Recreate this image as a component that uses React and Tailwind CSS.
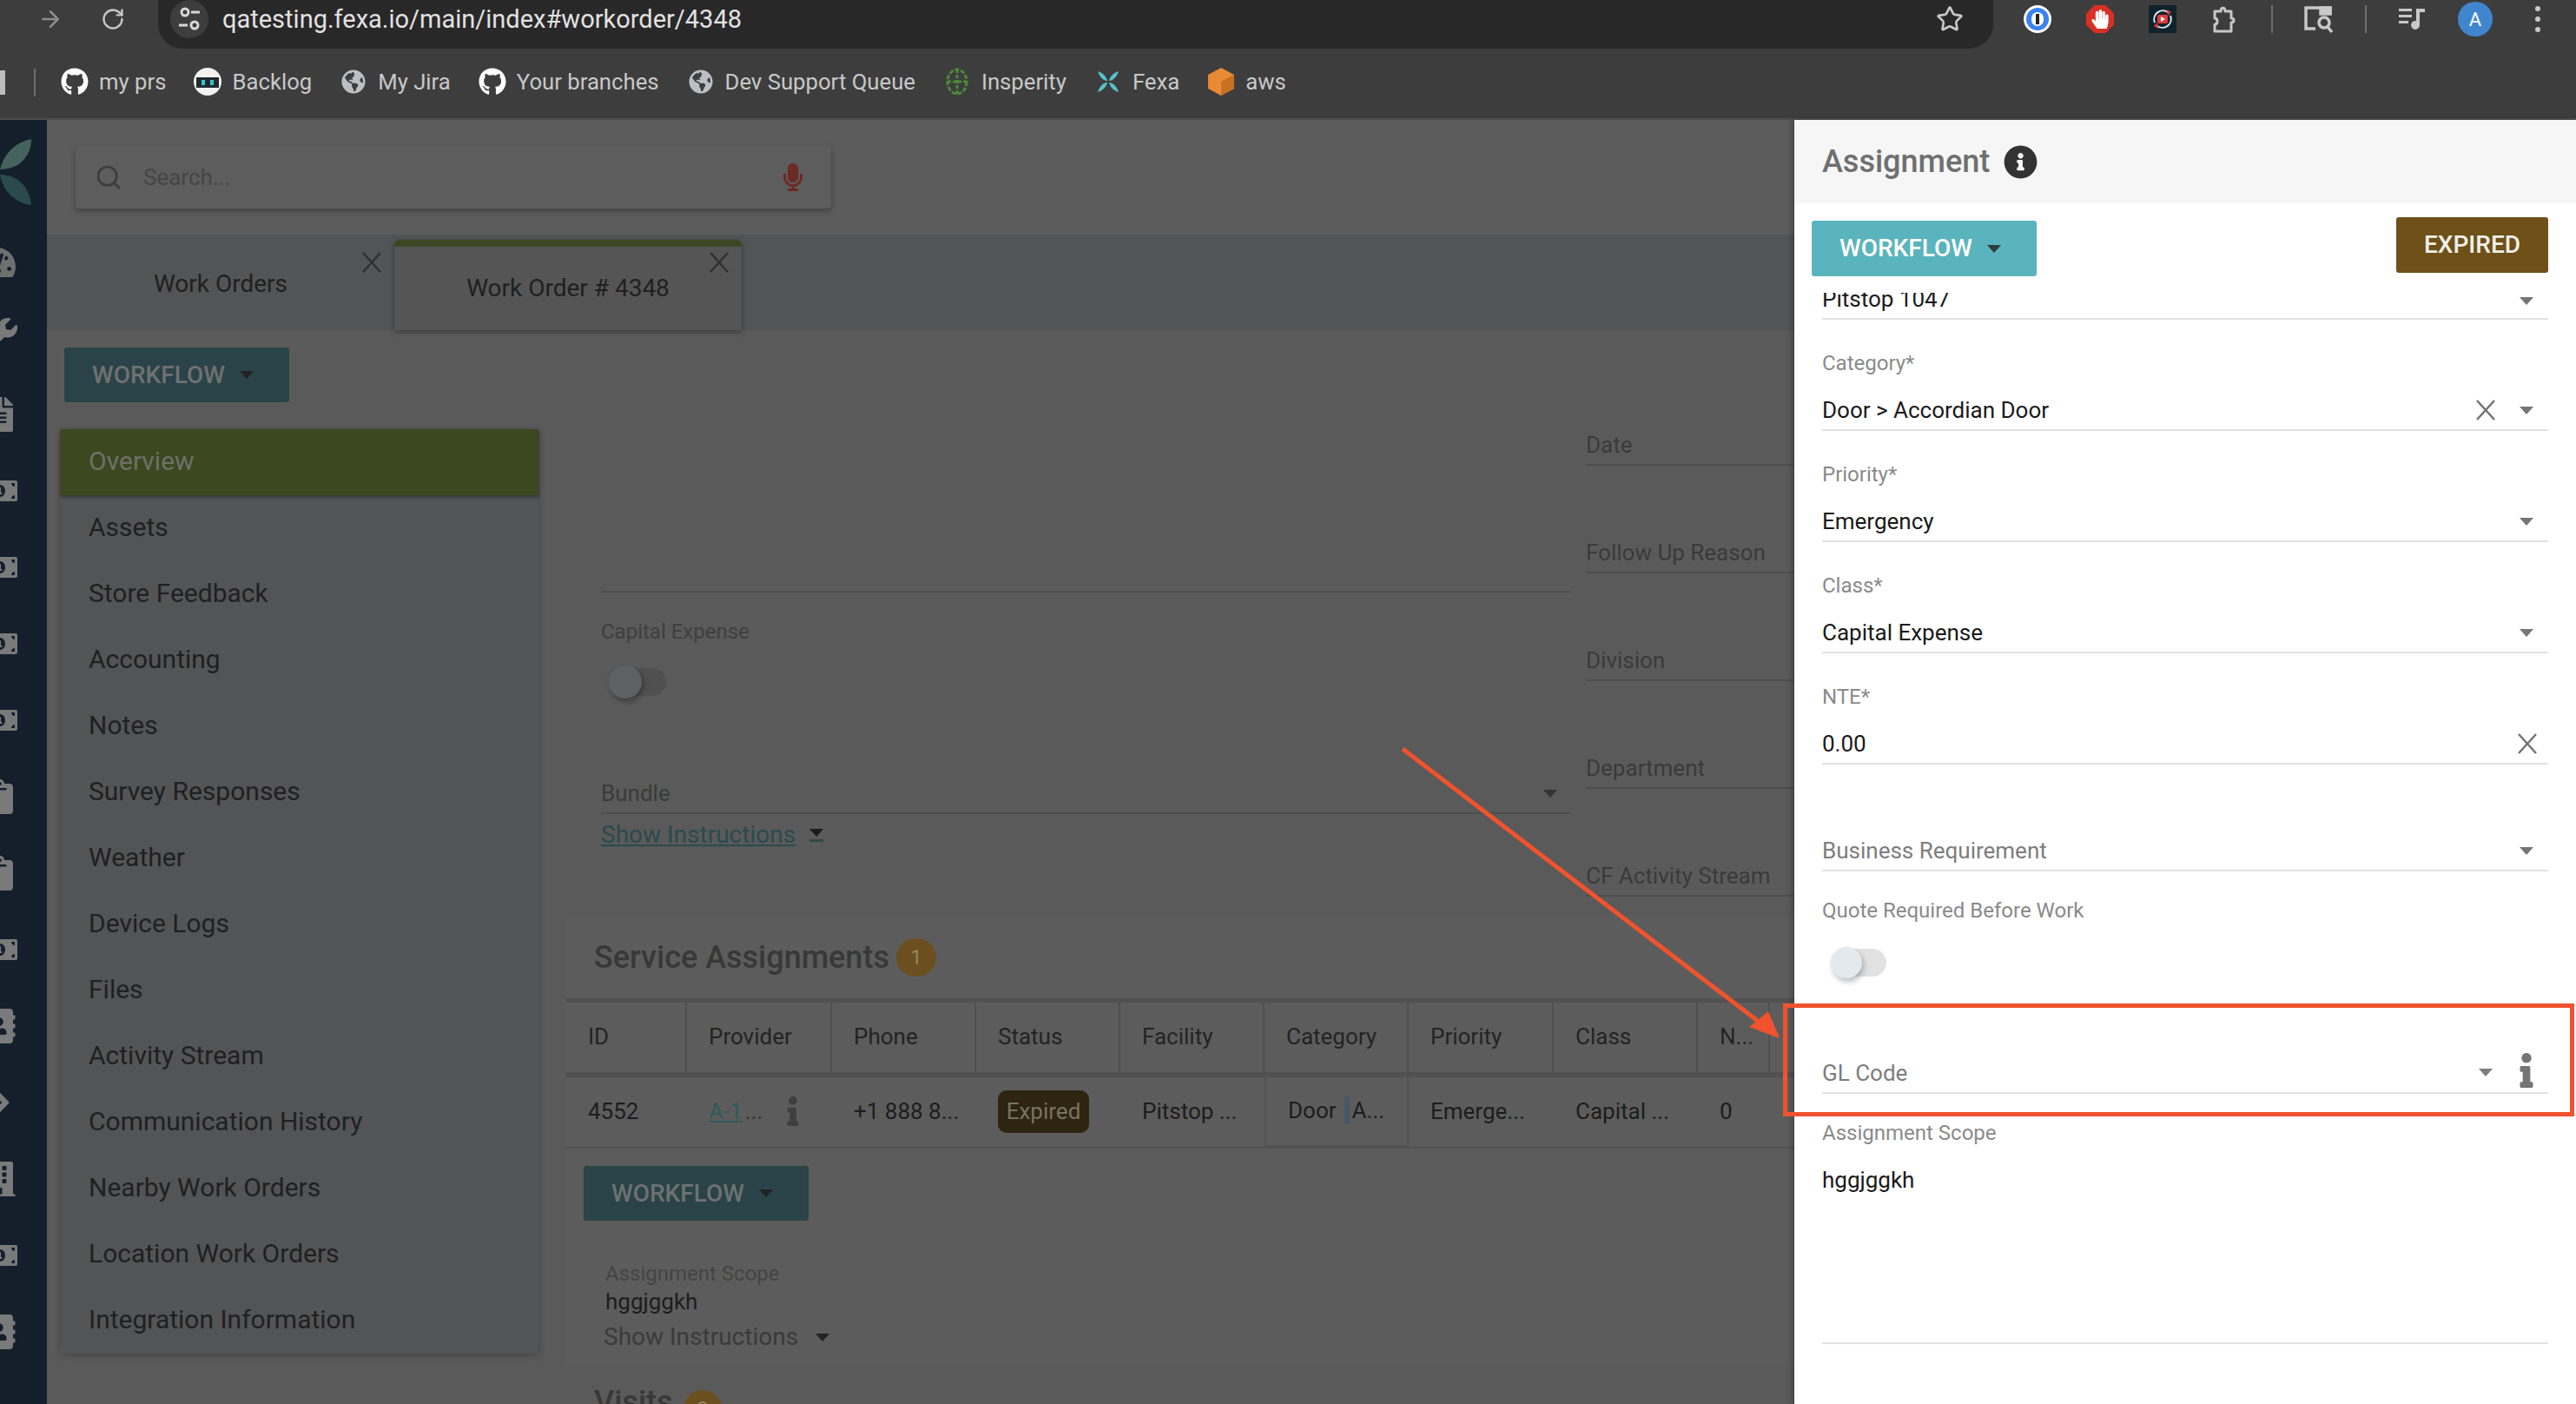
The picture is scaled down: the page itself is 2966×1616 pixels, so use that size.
import { ArrowRight, RotateCw, Star, Search } from 'lucide-react'
import {
  FaGithub, FaGlobeAmericas, FaHandPaper, FaMicrophone, FaInfo, FaInfoCircle, FaTachometerAlt, FaWrench,
  FaFileAlt, FaMoneyBillAlt, FaClipboard, FaAddressBook, FaChevronRight, FaBuilding,
} from 'react-icons/fa'

const menu = [
  'Overview', 'Assets', 'Store Feedback', 'Accounting', 'Notes', 'Survey Responses', 'Weather', 'Device Logs',
  'Files', 'Activity Stream', 'Communication History', 'Nearby Work Orders', 'Location Work Orders', 'Integration Information',
]

const columns = ['ID', 'Provider', 'Phone', 'Status', 'Facility', 'Category', 'Priority', 'Class', 'N...']
const gridCols = 'grid grid-cols-[140px_167px_166px_166px_166px_166px_167px_166px_83px_1fr]'

// Iconos recortados del sidebar: [icono, alto de la fila]
const sideIcons = [
  [FaWrench, 94], [FaFileAlt, 88], [FaMoneyBillAlt, 88], [FaMoneyBillAlt, 88], [FaMoneyBillAlt, 88], [FaMoneyBillAlt, 88],
  [FaClipboard, 88], [FaClipboard, 88], [FaMoneyBillAlt, 88], [FaAddressBook, 88], [FaChevronRight, 88], [FaBuilding, 88],
  [FaMoneyBillAlt, 88], [FaAddressBook, 88],
]

function Caret({ className = 'text-[#757575]' }) {
  return (
    <svg width="16" height="9" viewBox="0 0 16 9" className={`shrink-0 ${className}`}>
      <path d="M0 0h16L8 9z" fill="currentColor" />
    </svg>
  )
}

function Cross({ className = 'text-[#707070]', size = 24 }) {
  return (
    <svg width={size} height={size} viewBox="0 0 24 24" className={`shrink-0 ${className}`}>
      <path d="M2 1l20 22M22 1L2 23" stroke="currentColor" strokeWidth="2.4" fill="none" />
    </svg>
  )
}

function Field({ label, value, clear, caret = true }) {
  return (
    <div className="h-[128px] flex flex-col justify-end border-b-2 border-[#e2e2e2]">
      <div className="h-[24px] leading-[24px] text-[24px] text-[#8a8a8a] mb-[20px]">{label}</div>
      <div className="h-[44px] flex items-center text-[26px] text-[#1a1a1a]">
        <span className="flex-1">{value}</span>
        {clear && <Cross className={caret ? 'text-[#707070] mr-[27px]' : 'text-[#707070] mr-[12px]'} />}
        {caret && <Caret className="text-[#757575] mr-[17px]" />}
      </div>
    </div>
  )
}

function DimField({ label }) {
  return (
    <div className="h-[124px] flex flex-col justify-end border-b-2 border-[#4d4d4d]">
      <div className="h-[44px] flex items-center text-[26px] text-[#3a3a3a]">{label}</div>
    </div>
  )
}

function WorkflowDim() {
  return (
    <button className="w-[259px] h-[63px] rounded-[3px] bg-[#2a4348] flex items-center pl-[32px] gap-[17px] text-[28px] font-medium text-[#6e7172]">
      WORKFLOW <Caret className="text-[#222222]" />
    </button>
  )
}

function Bookmark({ icon, label, className = 'mr-[32px]' }) {
  return (
    <div className={`flex items-center gap-[12px] ${className}`}>
      <span className="w-[32px] h-[36px] flex items-center justify-center">{icon}</span>
      <span className="text-[25.7px] text-[#c8c8c8] whitespace-nowrap">{label}</span>
    </div>
  )
}

function ToolSlot({ children, wide = true }) {
  return <span className={`${wide ? 'w-[72px]' : 'w-[36px]'} h-[44px] flex items-center justify-center`}>{children}</span>
}

function BrowserActions() {
  return (
    <div className="ml-[15px] -mt-[12px] flex items-center">
      <ToolSlot>
        <span className="w-[32px] h-[32px] rounded-full bg-[#3b82f0] border-[3px] border-white flex items-center justify-center">
          <span className="w-[14px] h-[16px] rounded-full bg-white flex items-center justify-center">
            <span className="w-[4px] h-[12px] bg-[#222222]" />
          </span>
        </span>
      </ToolSlot>
      <ToolSlot>
        <span className="w-[32px] h-[32px] bg-[#d93025] [clip-path:polygon(30%_0,70%_0,100%_30%,100%_70%,70%_100%,30%_100%,0_70%,0_30%)] flex items-center justify-center">
          <FaHandPaper size={22} className="text-white" />
        </span>
      </ToolSlot>
      <ToolSlot>
        <span className="w-[32px] h-[32px] bg-[#10222c] flex items-center justify-center">
          <svg width="28" height="28" viewBox="0 0 28 28" fill="none">
            <path d="M5 18A10 10 0 0 1 20 6M23 10A10 10 0 0 1 8 22" stroke="#dce8ee" strokeWidth="2" />
            <path d="M19 3l5 3-4 4zM9 25l-5-3 4-4z" fill="#e03c3c" />
            <rect x="8" y="9" width="12" height="10" rx="2" fill="#e03c3c" />
            <path d="M12 11l5 3-5 3z" fill="#ffffff" />
          </svg>
        </span>
      </ToolSlot>
      <ToolSlot>
        <svg width="30" height="34" viewBox="0 0 30 34" fill="none" stroke="#c8c8c8" strokeWidth="3" strokeLinejoin="round">
          <path d="M3 8h7c0-5 5-5 5 0h7v8c4 0 4 5 0 5v10H3v-8c4 0 4-7 0-7z" />
        </svg>
      </ToolSlot>
      <ToolSlot wide={false}>
        <span className="w-[2px] h-[32px] bg-[#6e6e6e]" />
      </ToolSlot>
      <ToolSlot>
        <svg width="36" height="34" viewBox="0 0 36 34" fill="none" stroke="#c8c8c8" strokeWidth="3.5">
          <path d="M14 28H3V4h28v8" />
          <circle cx="24" cy="21" r="6" />
          <path d="M28 26l5 6" />
          <path d="M20 4h11v7H20z" fill="#c8c8c8" />
        </svg>
      </ToolSlot>
      <ToolSlot wide={false}>
        <span className="w-[2px] h-[32px] bg-[#6e6e6e]" />
      </ToolSlot>
      <ToolSlot>
        <svg width="32" height="26" viewBox="0 0 32 26" fill="#c8c8c8">
          <path d="M0 1h15v3H0zM0 8h15v3H0zM0 15h11v3H0z" />
          <path d="M20 1h10v4h-6v15a5 5 0 1 1-4-5z" />
        </svg>
      </ToolSlot>
      <ToolSlot>
        <span className="w-[40px] h-[40px] rounded-full bg-[#3f86cf] flex items-center justify-center text-[22px] text-white">A</span>
      </ToolSlot>
      <ToolSlot>
        <span className="flex flex-col gap-[6px]">
          <span className="w-[6px] h-[6px] rounded-full bg-[#c8c8c8]" />
          <span className="w-[6px] h-[6px] rounded-full bg-[#c8c8c8]" />
          <span className="w-[6px] h-[6px] rounded-full bg-[#c8c8c8]" />
        </span>
      </ToolSlot>
    </div>
  )
}

function BrowserBar() {
  return (
    <div className="h-[138px] shrink-0 bg-[#3d3d3d] border-b-2 border-[#4e4e4e]">
      <div className="h-[56px] flex items-center">
        <ArrowRight size={30} className="ml-[43px] -mt-[12px] text-[#8c8c8c]" />
        <RotateCw size={28} className="ml-[43px] -mt-[12px] text-[#c8c8c8]" />
        <div className="ml-[38px] w-[2113px] h-[56px] rounded-b-[28px] bg-[#282828] flex items-center pl-[14px] pr-[34px]">
          <span className="w-[44px] h-[44px] -mt-[12px] rounded-full bg-[#3d3d3d] flex items-center justify-center">
            <svg width="24" height="30" viewBox="0 0 24 30" fill="none" stroke="#d8d8d8" strokeWidth="3">
              <circle cx="7" cy="7" r="4" />
              <path d="M14 7h10M0 22h10" />
              <circle cx="18" cy="22" r="4" />
            </svg>
          </span>
          <span className="ml-[16px] -mt-[10px] flex-1 text-[29px] text-[#e2e2e2]">qatesting.fexa.io/main/index#workorder/4348</span>
          <Star size={32} className="-mt-[12px] text-[#c8c8c8]" />
        </div>
        <BrowserActions />
      </div>
      <div className="h-[80px] pb-[3px] flex items-center">
        <span className="w-[6px] h-[28px] border-y-[6px] border-r-[6px] border-[#bdbdbd]" />
        <span className="ml-[33px] mr-[29px] w-[2px] h-[32px] bg-[#6e6e6e]" />
        <Bookmark icon={<FaGithub size={32} className="text-white" />} label="my prs" />
        <Bookmark
          icon={
            <svg width="32" height="32" viewBox="0 0 32 32">
              <circle cx="16" cy="16" r="16" fill="#f2f2f2" />
              <rect x="3" y="11" width="26" height="12" fill="#222a30" />
              <rect x="9" y="14" width="4" height="6" fill="#35c5d0" />
              <rect x="19" y="14" width="4" height="6" fill="#35c5d0" />
            </svg>
          }
          label="Backlog"
        />
        <Bookmark icon={<FaGlobeAmericas size={28} className="text-[#bcc0c6]" />} label="My Jira" />
        <Bookmark icon={<FaGithub size={32} className="text-white" />} label="Your branches" />
        <Bookmark icon={<FaGlobeAmericas size={28} className="text-[#bcc0c6]" />} label="Dev Support Queue" />
        <Bookmark
          icon={
            <svg width="28" height="32" viewBox="0 0 28 32" fill="none" stroke="#4c8a3c" strokeWidth="3">
              <ellipse cx="14" cy="16" rx="11" ry="14" strokeDasharray="5 2" />
              <path d="M3 16h22M14 2v28" strokeDasharray="4 2" />
            </svg>
          }
          label="Insperity"
        />
        <Bookmark
          icon={
            <svg width="26" height="28" viewBox="0 0 26 24" fill="#58c0c8">
              <path d="M1 0c6 2 10 6 11 11C7 11 3 6 1 0zM25 0c-6 2-10 6-11 11 5 0 9-5 11-11zM1 24c6-2 10-6 11-11-5 0-9 5-11 11zM25 24c-6-2-10-6-11-11 5 0 9 5 11 11z" />
            </svg>
          }
          label="Fexa"
        />
        <Bookmark
          icon={
            <svg width="30" height="32" viewBox="0 0 30 32">
              <path d="M15 0l15 8v16l-15 8L0 24V8z" fill="#e98a35" />
              <path d="M15 16v16l15-8V8z" fill="#c96f22" />
            </svg>
          }
          label="aws"
          className=""
        />
      </div>
    </div>
  )
}

function Sidebar() {
  return (
    <div className="w-[54px] shrink-0 bg-[#141f2b] overflow-hidden flex flex-col">
      <svg width="37" height="77" viewBox="0 0 37 77" className="mt-[22px] shrink-0">
        <path d="M0 35C5 15 20 3 36 0 36 20 22 35 0 35z" fill="#44635f" />
        <path d="M0 41C20 41 34 55 36 76 18 74 3 60 0 41z" fill="#2b4a4b" />
      </svg>
      <FaTachometerAlt size={44} className="-ml-[26px] mt-[43px] mb-[15px] shrink-0 text-[#6f6f6f]" />
      {sideIcons.map(([Icon, h], i) => (
        <div key={i} className="shrink-0 flex items-center -ml-[20px]" style={{ height: h }}>
          <Icon size={40} className="text-[#7a7a7a]" />
        </div>
      ))}
    </div>
  )
}

function LeftMenu() {
  return (
    <div className="w-[550px] ml-[16px] shrink-0">
      <div className="mt-[20px] ml-[4px]">
        <WorkflowDim />
      </div>
      <div className="mt-[31px] bg-[#535455] shadow-[0_2px_8px_rgba(0,0,0,0.25)]">
        {menu.map((m, i) => (
          <div
            key={m}
            className={`h-[76px] pl-[32px] pb-[3px] flex items-center text-[30px] ${i === 0 ? 'bg-[#3b4820] text-[#6f7068] shadow-[0_2px_4px_rgba(0,0,0,0.4)]' : 'text-[#1f2022]'}`}
          >
            {m}
          </div>
        ))}
      </div>
    </div>
  )
}

function ServiceAssignments() {
  return (
    <div className="h-[517px] shrink-0 bg-[#5c5c5c] flex flex-col">
      <div className="h-[94px] pl-[33px] flex items-center gap-[8px]">
        <span className="text-[36px] font-medium text-[#383838]">Service Assignments</span>
        <span className="w-[46px] h-[44px] rounded-full bg-[#6b4f1f] flex items-center justify-center text-[24px] text-[#8f8468]">1</span>
      </div>
      <div className={`${gridCols} h-[91px] border-t-[5px] border-b-[6px] border-[#515151] text-[26px] text-[#232323]`}>
        {columns.map((c, i) => (
          <div key={c} className={`flex items-center pb-[2px] border-r-2 border-[#4f4f4f] ${i === 0 ? 'pl-[26px]' : 'pl-[25px]'}`}>{c}</div>
        ))}
      </div>
      <div className={`${gridCols} h-[82px] border-b-2 border-[#505050] text-[26px] text-[#1c1c1c]`}>
        <div className="pl-[26px] pb-[2px] flex items-center">4552</div>
        <div className="pl-[25px] pb-[2px] flex items-center">
          <span className="text-[#2f5a60] underline">A-1 </span>
          <span className="text-[#333333] ml-[3px]">...</span>
          <FaInfo size={34} className="ml-[18px] text-[#3f3f3f]" />
        </div>
        <div className="pl-[25px] pb-[2px] flex items-center">+1 888 8...</div>
        <div className="pl-[25px] pb-[2px] flex items-center">
          <span className="w-[105px] h-[49px] rounded-[10px] bg-[#2e2412] flex items-center justify-center text-[#77735e]">Expired</span>
        </div>
        <div className="pl-[25px] pb-[2px] flex items-center">Pitstop ...</div>
        <div className="pl-[25px] pb-[2px] flex items-center border-x-2 border-b-2 border-[#535353]">
          Door<span className="ml-[9px] mr-[3px] w-[6px] h-[32px] bg-[#48566a]" />A...
        </div>
        <div className="pl-[25px] pb-[2px] flex items-center">Emerge...</div>
        <div className="pl-[25px] pb-[2px] flex items-center">Capital ...</div>
        <div className="pl-[25px] pb-[2px] flex items-center">0</div>
      </div>
      <div className="mt-[20px] ml-[21px]">
        <WorkflowDim />
      </div>
      <div className="mt-[49px] ml-[46px] h-[24px] leading-[24px] text-[24px] text-[#444444]">Assignment Scope</div>
      <div className="mt-[8px] ml-[46px] h-[24px] leading-[24px] text-[26px] text-[#1c1c1c]">hggjggkh</div>
      <div className="mt-[14px] ml-[44px] h-[30px] flex items-center gap-[20px] text-[28px] text-[#3a3a3a]">
        Show Instructions <Caret className="text-[#222222]" />
      </div>
    </div>
  )
}

function MainBody() {
  return (
    <div className="flex-1 min-h-0 flex overflow-hidden">
      <LeftMenu />
      <div className="flex-1 ml-[31px] min-w-0 flex flex-col">
        <div className="h-[675px] shrink-0 pl-[41px] flex gap-[18px]">
          <div className="w-[1116px] flex flex-col">
            <div className="h-[302px] border-b-2 border-[#4d4d4d]" />
            <div className="mt-[33px] h-[24px] leading-[24px] text-[24px] text-[#3f3f3f]">Capital Expense</div>
            <div className="mt-[27px] relative w-[66px] h-[40px] ml-[9px]">
              <div className="absolute left-[10px] top-[3px] w-[56px] h-[32px] rounded-full bg-[#505050]" />
              <div className="absolute left-0 top-0 w-[38px] h-[38px] rounded-full bg-[#5e6062] shadow-[2px_4px_6px_rgba(0,0,0,0.3)]" />
            </div>
            <div className="mt-[85px] h-[44px] flex items-center justify-between pr-[15px] border-b-2 border-[#4d4d4d] text-[26px] text-[#3a3a3a] box-content">
              Bundle <Caret className="text-[#333333]" />
            </div>
            <div className="mt-[7px] h-[34px] flex items-center gap-[16px] text-[28px] text-[#2a4a4e]">
              <span className="underline">Show Instructions</span>
              <span className="border-b-[3px] border-[#2a4a4e] pb-[3px]"><Caret className="text-[#1c1c1c]" /></span>
            </div>
          </div>
          <div className="flex-1 pt-[32px]">
            {['Date', 'Follow Up Reason', 'Division', 'Department', 'CF Activity Stream'].map((f) => (
              <DimField key={f} label={f} />
            ))}
          </div>
        </div>
        <ServiceAssignments />
        <div className="flex-1 min-h-0 overflow-hidden pl-[33px] pt-[22px] flex items-start gap-[12px] bg-[#5a5a5a]">
          <span className="text-[36px] leading-[40px] font-medium text-[#383838]">Visits</span>
          <span className="mt-[6px] w-[44px] h-[44px] rounded-full bg-[#6b4f1f] flex items-center justify-center text-[24px] text-[#8f8468]">0</span>
        </div>
      </div>
    </div>
  )
}

function Main() {
  return (
    <div className="flex-1 min-w-0 flex flex-col bg-[#5a5a5a]">
      <div className="h-[132px] shrink-0 bg-[#5c5c5c] pt-[30px] pl-[33px] shadow-[0_2px_4px_rgba(0,0,0,0.15)]">
        <div className="w-[870px] h-[72px] rounded-[4px] bg-[#5d5d5d] shadow-[0_3px_6px_rgba(0,0,0,0.3)] flex items-center pl-[22px] pr-[28px]">
          <Search size={32} className="text-[#3c3c3c]" />
          <span className="ml-[24px] flex-1 text-[26px] text-[#454545]">Search...</span>
          <FaMicrophone size={32} className="text-[#6b2a24]" />
        </div>
      </div>
      <div className="h-[110px] shrink-0 bg-[#535455] flex">
        <div className="w-[400px] h-full pt-[4px] relative flex items-center justify-center text-[28px] text-[#1f1f1f]">
          Work Orders
          <Cross className="absolute right-[14px] top-[20px] text-[#2f2f2f]" />
        </div>
        <div className="mt-[6px] w-[400px] h-[104px] relative rounded-t-[6px] border-t-[8px] border-[#3d4724] bg-[#555555] shadow-[0_2px_6px_rgba(0,0,0,0.35)] flex items-center justify-center text-[28px] text-[#1f1f1f]">
          Work Order # 4348
          <Cross className="absolute right-[14px] top-[6px] text-[#2f2f2f]" />
        </div>
      </div>
      <MainBody />
    </div>
  )
}

function Panel() {
  return (
    <div className="w-[900px] shrink-0 bg-white shadow-[-3px_0_6px_rgba(0,0,0,0.25)] flex flex-col relative z-10">
      <div className="h-[96px] shrink-0 bg-[#f6f6f6] pl-[32px] flex items-center gap-[16px]">
        <span className="text-[36px] font-medium text-[#6f6f6f]">Assignment</span>
        <FaInfoCircle size={39} className="text-[#333333]" />
      </div>
      <div className="h-[103px] shrink-0 pl-[20px] pr-[32px] flex items-start justify-between">
        <button className="mt-[20px] w-[259px] h-[64px] rounded-[3px] bg-[#5ab4bd] flex items-center pl-[32px] gap-[17px] text-[28px] font-medium text-white">
          WORKFLOW <Caret className="text-[#2e3d40]" />
        </button>
        <button className="mt-[16px] w-[175px] h-[64px] rounded-[3px] bg-[#6e5019] text-[28px] font-medium text-[#f1efe8]">EXPIRED</button>
      </div>
      <div className="px-[32px] flex-1 flex flex-col">
        <div className="h-[31px] border-b-2 border-[#e2e2e2] overflow-hidden flex justify-between">
          <span className="-mt-[8px] h-[30px] leading-[30px] text-[26px] text-[#1a1a1a]">Pitstop 1047</span>
          <Caret className="text-[#757575] mt-[5px] mr-[17px]" />
        </div>
        <Field label="Category*" value="Door > Accordian Door" clear />
        <Field label="Priority*" value="Emergency" />
        <Field label="Class*" value="Capital Expense" />
        <Field label="NTE*" value="0.00" clear caret={false} />
        <div className="h-[123px] flex flex-col justify-end border-b-2 border-[#e2e2e2]">
          <div className="h-[44px] flex items-center justify-between pr-[17px] text-[26px] text-[#7d7d7d]">
            Business Requirement <Caret />
          </div>
        </div>
        <div className="mt-[33px] h-[24px] leading-[24px] text-[24px] text-[#8a8a8a]">Quote Required Before Work</div>
        <div className="mt-[30px] relative w-[64px] h-[38px] ml-[10px]">
          <div className="absolute left-[10px] top-[2px] w-[54px] h-[32px] rounded-full bg-[#e2e2e2]" />
          <div className="absolute left-0 top-0 w-[36px] h-[36px] rounded-full bg-[#e3e9ec] shadow-[2px_4px_6px_rgba(0,0,0,0.25)]" />
        </div>
        <div className="mt-[85px] h-[46px] flex items-center border-b-2 border-[#e2e2e2] text-[26px] text-[#7d7d7d]">
          <span className="flex-1">GL Code</span>
          <Caret className="mr-[19px] mt-[-2px]" />
          <FaInfo size={40} className="mr-[5px] -mt-[6px] text-[#757575]" />
        </div>
        <div className="mt-[33px] h-[24px] leading-[24px] text-[24px] text-[#8a8a8a]">Assignment Scope</div>
        <div className="mt-[27px] h-[204px] border-b-2 border-[#e2e2e2] text-[26px] leading-[30px] text-[#1a1a1a]">hggjggkh</div>
      </div>
    </div>
  )
}

export default function App() {
  return (
    <div className="relative w-[2966px] h-[1616px] overflow-hidden bg-white [font-family:Roboto,sans-serif] flex flex-col">
      <BrowserBar />
      <div className="flex-1 min-h-0 flex">
        <Sidebar />
        <Main />
        <Panel />
      </div>
      {/* anotación roja encima de la captura */}
      <svg width="2966" height="1616" viewBox="0 0 2966 1616" className="absolute left-0 top-0 z-20 pointer-events-none">
        <path d="M1615 862L2025 1176" stroke="#f0532d" strokeWidth="5" fill="none" />
        <path d="M2049 1195L2014 1182L2036 1164z" fill="#f0532d" />
      </svg>
      <div className="absolute z-20 left-[2053px] top-[1155px] w-[911px] h-[130px] border-[5px] border-[#f0532d]" />
    </div>
  )
}
